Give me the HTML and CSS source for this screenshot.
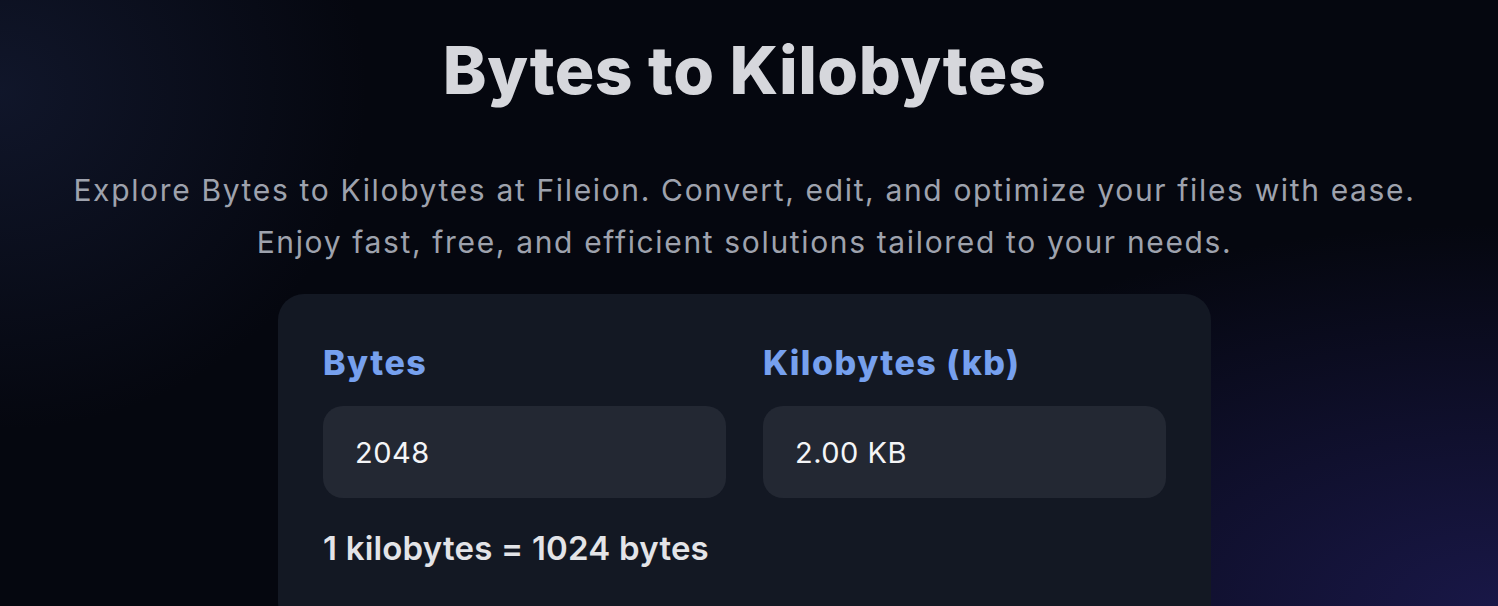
FILE: index.html
```html
<!DOCTYPE html>
<html lang="en">

<head>
    <meta charset="UTF-8">
    <meta name="viewport" content="width=device-width, initial-scale=1.0">
    <title>Bytes to Kilobytes</title>
    <link rel="stylesheet" href="styles.css">
</head>

<body>
    <main class="page">
        <h1 class="title">Bytes to Kilobytes</h1>
        <p class="intro">
            Explore Bytes to Kilobytes at Fileion. Convert, edit, and optimize your files with ease.<br>
            Enjoy fast, free, and efficient solutions tailored to your needs.
        </p>

        <section class="converter">
            <div class="fields">
                <div class="field">
                    <label for="bytes">Bytes</label>
                    <input type="text" id="bytes" value="2048">
                </div>
                <div class="field">
                    <label for="kb">Kilobytes (kb)</label>
                    <input type="text" id="kb" value="2.00 KB" readonly>
                </div>
            </div>
            <p class="rate">1 kilobytes = 1024 bytes</p>
        </section>
    </main>
</body>

</html>
```

FILE: styles.css
```css
html,
body {
    height: 100%;
}

body {
    margin: 0;
    padding: 0 9px 0 0;
    font-family: Inter, "Noto Sans", sans-serif;
    color: #d6d7dc;
    background-color: #05070f;
    background-image:
        radial-gradient(ellipse 70% 90% at 100% 100%, rgba(38, 34, 108, 0.6), rgba(38, 34, 108, 0) 70%),
        radial-gradient(ellipse 35% 80% at 0% 15%, rgba(30, 40, 75, 0.45), rgba(30, 40, 75, 0) 70%);
    overflow: hidden;
}

.page {
    display: flex;
    flex-direction: column;
    align-items: center;
    padding-top: 30px;
}

.title {
    margin: 0;
    font-size: 66px;
    font-weight: 800;
    line-height: 80px;
    letter-spacing: 0.5px;
    color: #d6d7dc;
}

.intro {
    margin: 54px 0 0;
    font-size: 30px;
    line-height: 52px;
    letter-spacing: 1.65px;
    text-align: center;
    color: #9ea2ad;
}

.converter {
    width: 843px;
    margin-top: 26px;
    padding: 49px 45px 60px;
    background: #131823;
    border-radius: 26px;
}

.fields {
    display: grid;
    grid-template-columns: 1fr 1fr;
    gap: 37px;
}

.field label {
    display: block;
    font-size: 34px;
    font-weight: 800;
    line-height: 40px;
    letter-spacing: 1.5px;
    color: #76a0ee;
}

.field input {
    display: block;
    box-sizing: border-box;
    width: 100%;
    height: 92px;
    margin-top: 23px;
    padding: 0 32px;
    border: none;
    border-radius: 20px;
    outline: none;
    background: #232833;
    font-family: Inter, "Noto Sans", sans-serif;
    font-size: 29px;
    letter-spacing: 0.5px;
    color: #f4f5f7;
}

.rate {
    margin: 30px 0 0;
    font-size: 33px;
    font-weight: 600;
    line-height: 40px;
    letter-spacing: 0.2px;
    color: #e3e4e8;
}
```
